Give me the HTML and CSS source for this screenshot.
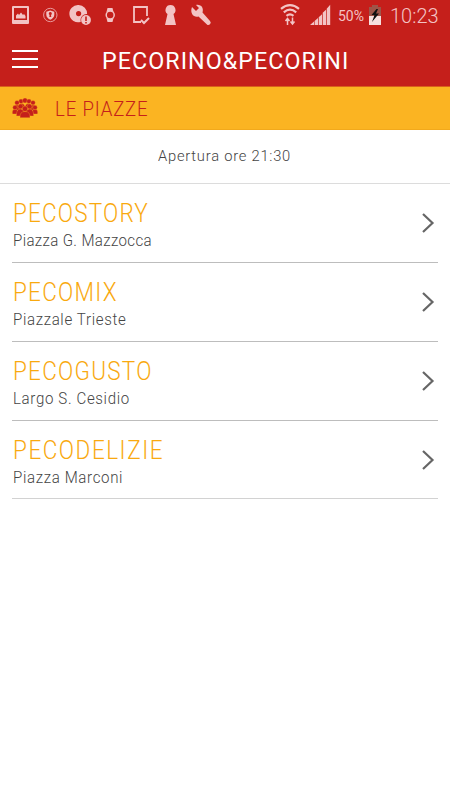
FILE: index.html
```html
<!DOCTYPE html>
<html lang="it">
<head>
<meta charset="utf-8">
<title>Pecorino&amp;Pecorini</title>
<link rel="stylesheet" href="styles.css">
</head>
<body>
<div class="status">
  <svg class="status-icons" width="220" height="32" viewBox="0 0 220 32" fill="#f3c3c4">
    <path fill-rule="evenodd" d="M13 6h15a1 1 0 0 1 1 1v16a1 1 0 0 1-1 1H13a1 1 0 0 1-1-1V7a1 1 0 0 1 1-1zm1 2v12h13V8zm2 10.500v-3l2-2 1 1.500 2-2.500 2 2.500 1-1 1.500 2v2.500z"/>
    <circle cx="50.300" cy="15" r="6.700" fill="none" stroke="#e99a9c"/>
    <path fill-rule="evenodd" d="M50.300 10.500l4 1.200v3c0 2.500-2 4-4 5-2-1-4-2.500-4-5v-3zM50.300 12a1.600 1.600 0 0 0-.7 3l-.3 2h2l-.3-2a1.600 1.600 0 0 0-.7-3z"/>
    <path fill-rule="evenodd" d="M78.600 5a8.600 8.600 0 1 0 2.200 16.700 6 6 0 0 1 6.300-7.700A8.600 8.600 0 0 0 78.600 5zm0 6a2.600 2.600 0 1 1 0 5.200 2.600 2.600 0 0 1 0-5.200z"/>
    <circle cx="86" cy="20" r="4.900"/>
    <path stroke="#c51f1b" stroke-width="1.600" d="M86 16.500v4.500m0 1v1.500"/>
    <path d="M107.500 8h5l1 4h-7zm-1 10h7l-1 4h-5z"/>
    <circle cx="110.200" cy="15" r="4" fill="#c51f1b" stroke="#f3c3c4" stroke-width="1.500"/>
    <path fill="none" stroke="#f3c3c4" stroke-width="1.800" d="M147 16V7h-13v15h7"/>
    <path fill="none" stroke="#f3c3c4" stroke-width="2" d="M141 20l3 3 5-5"/>
    <path d="M170.500 5a5 5 0 0 1 3 9l2.500 11h-11l2.500-11a5 5 0 0 1 3-9z"/>
    <path d="M192 7l4 4 3-3-3-3c5-1 8 3 6.500 7.500l7.500 8.500a2.200 2.200 0 0 1-3.300 3.200l-8.200-7.700c-4.500 1.500-9-3-6.500-9.500z"/>
  </svg>
  <svg class="status-icons" width="64" height="32" viewBox="276 0 64 32" fill="#f3c3c4">
    <g fill="none" stroke="#f3c3c4" stroke-width="2.200">
      <path d="M281 8.800q9-7.500 18 0M283.800 12.300q6.200-5.300 12.400 0M286.500 15.800q3.500-3 7 0"/>
      <path stroke-width="1.500" d="M287.500 25v-6.500m-2 2.500l2-2.500 2 2.500M292.500 17.500V24m-2-2.500l2 2.500 2-2.500"/>
    </g>
    <path d="M310 25l4-3.500V25zm4.600-4l3.400-3V25h-3.400zm4.100-3.700l3.300-3V25h-3.300zm4-4.500l3.300-3V25h-3.300zm4-4l3.500-4V25h-3.500z"/>
  </svg>
  <span class="battery-level">50%</span>
  <svg class="battery" width="14" height="22" viewBox="0 0 14 22">
    <path fill="#9e5549" d="M4 1h6v2h3v9H1V3h3z"/>
    <path fill="#f6e0df" d="M1 12h12v9H1z"/>
    <path fill="#111" d="M8.500 5L3.500 11h3L4 18l7-8.500H8l2-4.500z"/>
  </svg>
  <span class="clock">10:23</span>
</div>
<header class="header">
  <div class="menu"><i></i><i></i><i></i></div>
  <h1 class="title"><span class="title-text">PECORINO&amp;PECORINI</span></h1>
</header>
<div class="section">
  <svg class="crowd" width="26" height="20" viewBox="0 0 26 20" fill="#c51f1b" stroke="#fbb422" stroke-width=".35">
    <circle cx="9" cy="3.300" r="2.300"/><circle cx="13" cy="2.500" r="2.500"/><circle cx="17" cy="3.300" r="2.300"/><circle cx="5" cy="4.800" r="2.300"/><circle cx="21" cy="4.800" r="2.300"/>
    <path d="M1.500 12q0-5 3.500-5t3.500 5zM17.500 12q0-5 3.500-5t3.500 5zM6 10q0-4.500 3.500-4.500T13 10zM13 10q0-4.500 3.500-4.500T20 10z"/>
    <circle cx="3" cy="9.500" r="2.300"/><circle cx="23" cy="9.500" r="2.300"/>
    <path d="M.5 16q-1-4.500 2.500-4.500t4 4.500zM25.500 16q1-4.500-2.500-4.500t-4 4.500z"/>
    <circle cx="8.500" cy="8.500" r="2.500"/><circle cx="17.500" cy="8.500" r="2.500"/>
    <path d="M4.300 18q0-7 4.200-7t4.200 7zM13.300 18q0-7 4.200-7t4.200 7z"/>
    <circle cx="13" cy="10.800" r="2.700"/>
    <path d="M8 19.700q-.5-6.200 5-6.200t5 6.200z"/>
  </svg>
  <h2 class="section-title">LE PIAZZE</h2>
</div>
<p class="opening"><span class="opening-text">Apertura ore 21:30</span></p>
<main class="list">
  <a class="row">
    <div><h3 class="name story">PECOSTORY</h3><p class="place mazzocca">Piazza G. Mazzocca</p></div>
    <svg class="chevron" width="14" height="22" viewBox="0 0 14 22"><path d="M2 2l9.500 9L2 20"/></svg>
  </a>
  <a class="row">
    <div><h3 class="name mix">PECOMIX</h3><p class="place trieste">Piazzale Trieste</p></div>
    <svg class="chevron" width="14" height="22" viewBox="0 0 14 22"><path d="M2 2l9.500 9L2 20"/></svg>
  </a>
  <a class="row">
    <div><h3 class="name gusto">PECOGUSTO</h3><p class="place cesidio">Largo S. Cesidio</p></div>
    <svg class="chevron" width="14" height="22" viewBox="0 0 14 22"><path d="M2 2l9.500 9L2 20"/></svg>
  </a>
  <a class="row last">
    <div><h3 class="name delizie">PECODELIZIE</h3><p class="place marconi">Piazza Marconi</p></div>
    <svg class="chevron" width="14" height="22" viewBox="0 0 14 22"><path d="M2 2l9.500 9L2 20"/></svg>
  </a>
</main>
</body>
</html>
```
FILE: styles.css
```css
* { box-sizing: border-box; margin: 0; padding: 0; }
body { width: 450px; height: 800px; background: #fff; font-family: Roboto, "Liberation Sans", sans-serif; overflow: hidden; }
svg { display: block; flex: none; }
.status { display: flex; align-items: center; height: 32px; background: #c51f1b; color: #f3c3c4; }
.status-icons + .status-icons { margin-left: 56px; }
.battery-level { width: 29px; margin-left: -2px; font-size: 14px; line-height: 32px; white-space: nowrap; }
.battery { margin: 0 0 2px 1px; }
.clock { margin-left: 8px; font-size: 20px; font-weight: 350; line-height: 32px; white-space: nowrap; }
.header { display: flex; align-items: center; height: 54px; padding-left: 12px; background: #c51f1b; color: #fff; }
.menu { display: flex; flex-direction: column; gap: 6px; width: 26px; margin-bottom: 1px; }
.menu i { height: 2px; background: #fff; }
.title { flex: 1; padding-top: 3px; margin-left: 64px; font-size: 24.500px; line-height: 30px; white-space: nowrap; }
.title-text, .name, .place, .section-title, .opening-text { display: inline-block; white-space: nowrap; transform-origin: left center; }
.title-text { letter-spacing: 1.100px; font-weight: 450; transform: scaleX(.95); }
.section { display: flex; align-items: center; height: 44px; padding-left: 12px; background: #fbb422; border-top: 1px solid #d9601b; border-bottom: 1px solid #f2a91c; }
.crowd { margin-bottom: 1px; }
.section-title { margin: 1px 0 0 16.500px; color: #c51f1b; font-size: 20px; font-weight: 300; line-height: 24px; letter-spacing: .9px; transform: scaleX(.93); }
.opening { height: 54px; padding: 16px 0 0 158px; border-bottom: 1px solid #dcdcdc; color: #444; font-size: 15.500px; font-weight: 300; line-height: 20px; }
.opening-text { letter-spacing: .8px; transform: scaleX(.95); }
.list { padding: 0 12px; }
.row { display: flex; justify-content: space-between; height: 79px; padding: 15px 3px 0 1px; border-bottom: 1px solid #bdbdbd; }
.last { height: 78px; border-color: #d2d2d2; }
.name { display: block; width: max-content; color: #f9a90f; font-size: 25px; font-weight: 300; line-height: 30px; transform: scaleX(.9); }
.story { letter-spacing: 1.300px; }
.mix { letter-spacing: 1.400px; }
.gusto { letter-spacing: 1.400px; }
.delizie { letter-spacing: 1.700px; }
.place { display: block; width: max-content; margin-top: 2px; color: #444; font-size: 16px; font-weight: 300; line-height: 20px; letter-spacing: .7px; transform: scaleX(.94); }
.mazzocca { letter-spacing: .4px; }
.chevron { margin-top: 13px; fill: none; stroke: #666; stroke-width: 2.200; }
```
